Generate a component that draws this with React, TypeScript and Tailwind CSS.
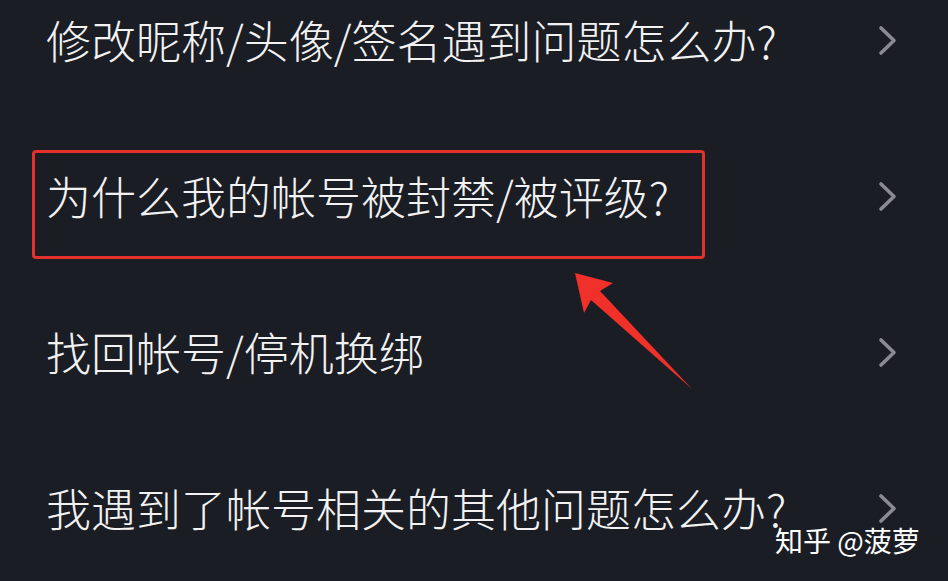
const items = [
  "修改昵称/头像/签名遇到问题怎么办?",
  "为什么我的帐号被封禁/被评级?",
  "找回帐号/停机换绑",
  "我遇到了帐号相关的其他问题怎么办?",
];

function Chevron() {
  return (
    <svg width="20" height="31" viewBox="0 0 20 31" className="shrink-0">
      <polyline
        points="3,3 16,15.5 3,28"
        fill="none"
        stroke="#8a8b90"
        strokeWidth="3.6"
        strokeLinecap="round"
        strokeLinejoin="round"
      />
    </svg>
  );
}

export default function App() {
  return (
    <div
      className="relative w-[948px] h-[581px] overflow-hidden bg-[#1b1d24] text-[#f2f2f2]"
      style={{ fontFamily: '"Noto Sans CJK SC", "Noto Sans", sans-serif' }}
    >
      <ul className="flex flex-col gap-[100px] pt-[12px] pl-[46px] pr-[50px]">
        {items.map((t, i) => (
          <li key={t} className="relative flex items-center justify-between h-[56px]">
            {i === 1 && (
              <div className="absolute left-[-14px] top-[-18px] w-[673px] h-[109px] rounded-[4px] border-[3px] border-[#e5302b]" />
            )}
            <span className="text-[45px] leading-[56px] font-light">{t}</span>
            <Chevron />
          </li>
        ))}
      </ul>

      <svg className="absolute left-0 top-0" width="948" height="581" viewBox="0 0 948 581">
        <polygon
          points="575,273 613,283 600,291 692,389 591,300 584,313"
          fill="#f1302a"
        />
      </svg>

      <div className="absolute left-[775px] top-[523px] text-[28px] leading-[34px] text-white">
        知乎 @菠萝
      </div>
    </div>
  );
}
